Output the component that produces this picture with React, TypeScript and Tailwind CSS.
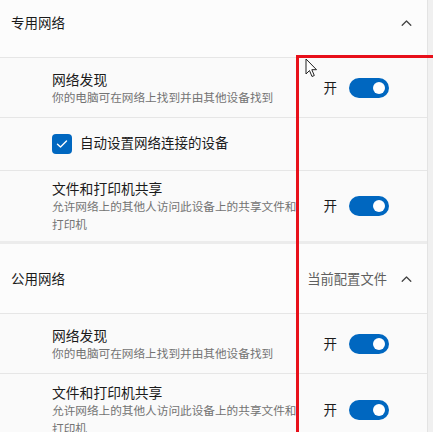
import React from "react";

const font = { fontFamily: '"Noto Sans CJK SC", "Noto Sans", sans-serif' };

function Toggle() {
  return (
    <div className="flex items-center">
      <span className="text-[13.5px] text-[#1b1b1b] mr-[12px] leading-none">开</span>
      <div className="w-[40px] h-[20px] rounded-full bg-[#0067c0] flex items-center justify-end pr-[4px]">
        <div className="w-[12px] h-[12px] rounded-full bg-white" />
      </div>
    </div>
  );
}

function Chevron() {
  return (
    <svg width="11" height="8" viewBox="0 0 11 8" fill="none">
      <path d="M1.2 6.3 L5.5 2 L9.8 6.3" stroke="#444" strokeWidth="1.3" strokeLinecap="round" strokeLinejoin="round" />
    </svg>
  );
}

function Header({ title, extra, first }: { title: string; extra?: string; first?: boolean }) {
  return (
    <div
      className={`h-[70px] flex items-center pl-[11px] pr-[15px] border-b border-[#e6e6e6] bg-[#fcfcfc] ${first ? "-mt-[12px]" : ""}`}
    >
      <span className="text-[13.5px] text-[#1b1b1b]">{title}</span>
      <div className="ml-auto flex items-center">
        {extra && <span className="text-[13.3px] text-[#5f5f5f] mr-[14px]">{extra}</span>}
        <Chevron />
      </div>
    </div>
  );
}

function Row({ title, sub, h, border = true }: { title: string; sub: string; h: string; border?: boolean }) {
  return (
    <div className={`${h} flex items-center pl-[52px] pr-[38px] ${border ? "border-b border-[#e6e6e6]" : ""}`}>
      <div className="w-[250px] flex flex-col">
        <span className="text-[13.8px] leading-[18px] text-[#1b1b1b]">{title}</span>
        <span className="text-[11.65px] leading-[18px] text-[#737373]">{sub}</span>
      </div>
      <div className="ml-auto">
        <Toggle />
      </div>
    </div>
  );
}

export default function App() {
  return (
    <div className="w-[433px] h-[432px] overflow-hidden relative bg-[#f0f0f0]" style={font}>
      <div className="w-[428px] border-r border-[#e3e3e3]">
        <div className="bg-[#fafafa]">
          <Header title="专用网络" first />
          <Row title="网络发现" sub="你的电脑可在网络上找到并由其他设备找到" h="h-[60px]" />
          <div className="h-[53px] flex items-center pl-[52px] border-b border-[#e6e6e6]">
            <div className="w-[20px] h-[20px] rounded-[4px] bg-[#0067c0] flex items-center justify-center">
              <svg width="12" height="10" viewBox="0 0 12 10" fill="none">
                <path d="M1.5 5.2 L4.5 8 L10.5 2" stroke="white" strokeWidth="1.4" strokeLinecap="round" strokeLinejoin="round" />
              </svg>
            </div>
            <span className="ml-[8px] text-[13.5px] leading-none text-[#1b1b1b] -mt-[2px]">自动设置网络连接的设备</span>
          </div>
          <Row
            title="文件和打印机共享"
            sub="允许网络上的其他人访问此设备上的共享文件和打印机"
            h="h-[70px]"
            border={false}
          />
        </div>
        <div className="h-[3px] bg-[#ececec]" />
        <div className="bg-[#fafafa]">
          <Header title="公用网络" extra="当前配置文件" />
          <Row title="网络发现" sub="你的电脑可在网络上找到并由其他设备找到" h="h-[60px]" />
          <Row
            title="文件和打印机共享"
            sub="允许网络上的其他人访问此设备上的共享文件和打印机"
            h="h-[72px]"
            border={false}
          />
        </div>
      </div>
      {/* red annotation rectangle */}
      <div className="absolute left-[296px] top-[55px] w-[200px] h-[420px] border-l-[3px] border-t-[3px] border-[#e8101a]" />
      {/* mouse cursor */}
      <svg className="absolute left-[305px] top-[58px]" width="13" height="20" viewBox="0 0 13 20">
        <path d="M1 1 L1 16 L4.5 12.5 L7 18.5 L9.3 17.5 L6.8 11.7 L11.5 11.7 Z" fill="white" stroke="#222" strokeWidth="1" strokeLinejoin="round" />
      </svg>
    </div>
  );
}
